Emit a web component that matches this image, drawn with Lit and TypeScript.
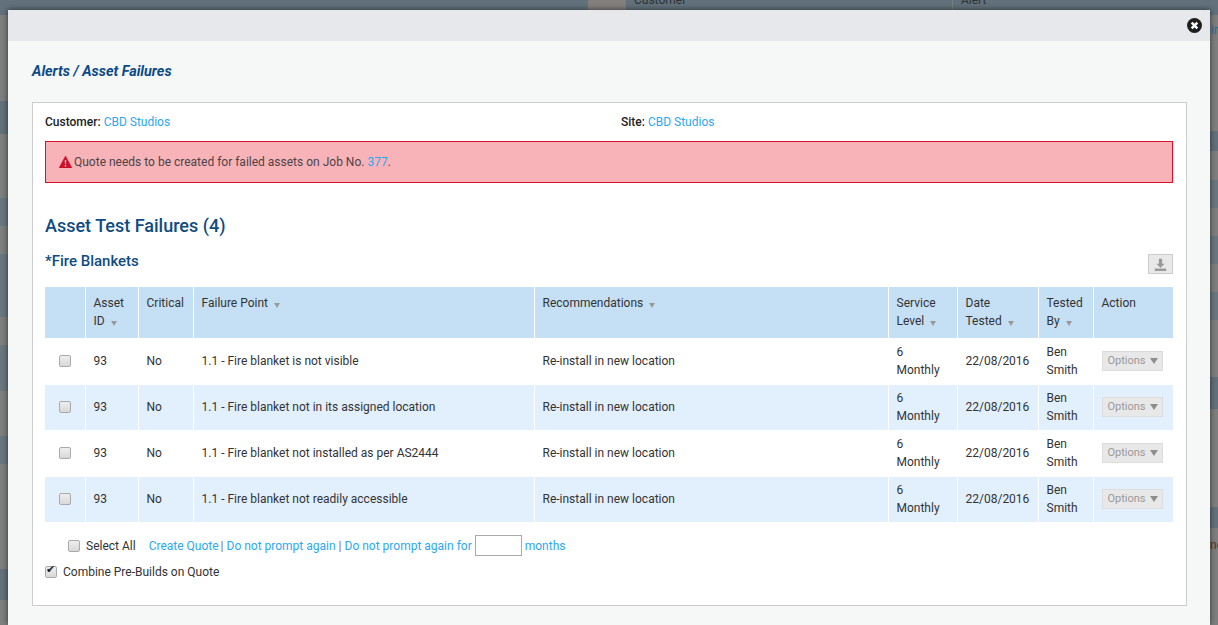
import { LitElement, html, css } from "lit";
import { customElement } from "lit/decorators.js";

const rows = [
  "1.1 - Fire blanket is not visible",
  "1.1 - Fire blanket not in its assigned location",
  "1.1 - Fire blanket not installed as per AS2444",
  "1.1 - Fire blanket not readily accessible",
];

const caret = html`<i class="caret"></i>`;

@customElement("app-root")
export class AppRoot extends LitElement {
  static styles = css`
    :host {
      display: block;
      position: relative;
      height: 625px;
      overflow: hidden;
      font-family: Roboto, "Liberation Sans", sans-serif;
      font-size: 12px;
      line-height: 18px;
      color: #333;
      background-color: #7f7f7f;
    }
    a {
      color: #2ea8ee;
      text-decoration: none;
    }

    /* page behind the modal */
    .backdrop {
      position: absolute;
      inset: 0;
      background:
        linear-gradient(
            to bottom,
            #62717b 0 15px,
            #7f7f7f 15px 101px,
            #62717b 101px 134px,
            #7f7f7f 134px 198px,
            #6b7780 198px 226px,
            #7f7f7f 226px 254px,
            #6b7780 254px 317px,
            #7f7f7f 317px 345px,
            #6b7780 345px 391px,
            #7f7f7f 391px 436px,
            #6b7780 436px 464px,
            #7f7f7f 464px 569px,
            #62717b 569px 600px,
            #7f7f7f 600px
          )
          0 0 / 8px 625px no-repeat,
        linear-gradient(
            to bottom,
            #62717b 0 15px,
            #7f7f7f 15px 131px,
            #62717b 131px 151px,
            #7f7f7f 151px 180px,
            #6b7780 180px 208px,
            #7f7f7f 208px 236px,
            #6b7780 236px 264px,
            #7f7f7f 264px 292px,
            #6b7780 292px 320px,
            #7f7f7f 320px 377px,
            #62717b 377px 409px,
            #7f7f7f 409px 507px,
            #62717b 507px 528px,
            #7f7f7f 528px
          )
          100% 0 / 8px 625px no-repeat,
        linear-gradient(#62717b, #62717b) 0 0 / 100% 15px no-repeat;
    }
    .bg-text {
      position: absolute;
      font-size: 12px;
      color: #2b3236;
    }
    .bg-customer {
      left: 634px;
      top: -9px;
    }
    .bg-alert {
      left: 961px;
      top: -9px;
    }
    .bg-link {
      left: 1211px;
      top: 21px;
      color: #256f96;
    }
    .bg-red {
      left: 1210px;
      top: 536px;
      color: #5e3030;
    }
    .bg-block {
      position: absolute;
      left: 588px;
      top: 0;
      width: 37px;
      height: 10px;
      background: #83807e;
    }
    .bg-line {
      position: absolute;
      top: 0;
      width: 1px;
      height: 10px;
      background: #77807f;
    }

    .modal {
      position: absolute;
      left: 8px;
      right: 8px;
      top: 10px;
      bottom: 0;
      background: #f6f8f8;
      box-shadow: 0 0 6px rgba(0, 0, 0, 0.6);
    }
    .modal-head {
      display: flex;
      justify-content: flex-end;
      align-items: center;
      height: 31px;
      padding-right: 8px;
      background: #e7e8ec;
    }
    .modal-head svg {
      display: block;
      width: 15px;
      height: 15px;
    }
    .modal-body {
      padding: 22px 23px 0 24px;
    }
    h1 {
      margin: 0 0 21px;
      font-size: 14.4px;
      line-height: 18px;
      font-weight: 700;
      font-style: italic;
      color: #0d4a86;
    }
    .panel {
      height: 504px;
      box-sizing: border-box;
      padding: 10px 13px 0 12px;
      background: #fff;
      border: 1px solid #ccc;
    }
    .meta {
      display: grid;
      grid-template-columns: 576px 1fr;
      height: 18px;
    }
    .meta b {
      font-weight: 500;
      color: #222;
    }
    .alert {
      display: flex;
      align-items: center;
      gap: 2px;
      box-sizing: border-box;
      height: 42px;
      margin-top: 10px;
      padding-left: 13px;
      background: #f8b3b9;
      border: 1px solid #d9112a;
      color: #4d4347;
    }
    .alert svg {
      width: 13px;
      height: 12px;
      flex: none;
    }
    h2 {
      margin: 32px 0 0;
      font-size: 18px;
      line-height: 22px;
      font-weight: 500;
      color: #0f4c81;
    }
    .sub {
      display: flex;
      justify-content: space-between;
      align-items: flex-start;
      height: 35px;
      margin-top: 15px;
    }
    h3 {
      margin: 0;
      font-size: 15px;
      line-height: 18px;
      font-weight: 500;
      color: #0f4c81;
    }
    .export {
      display: flex;
      align-items: center;
      justify-content: center;
      box-sizing: border-box;
      width: 25px;
      height: 20px;
      margin-top: 2px;
      background: #e8e8e8;
      border: 1px solid #ccc;
    }
    .export svg {
      width: 13px;
      height: 13px;
    }

    table {
      width: 1128px;
      table-layout: fixed;
      border-collapse: collapse;
    }
    th,
    td {
      box-sizing: border-box;
      padding: 4px 8px 5px;
      font-weight: 400;
      text-align: left;
      border-left: 1px solid #fff;
      border-right: 1px solid #fff;
      border-bottom: 1px solid #fff;
    }
    th:first-child,
    td:first-child {
      border-left: none;
    }
    th:last-child,
    td:last-child {
      border-right: none;
    }
    th {
      height: 51px;
      vertical-align: top;
      padding-top: 7px;
      padding-bottom: 6px;
      background: #c5e0f5;
    }
    td {
      height: 46px;
    }
    tbody tr:nth-child(even) td {
      background: #e2f0fe;
    }
    td.pick {
      padding-left: 14px;
      padding-right: 0;
    }
    .nowrap {
      white-space: nowrap;
    }
    .caret {
      display: inline-block;
      margin-left: 3px;
      vertical-align: -1px;
      border-left: 3px solid transparent;
      border-right: 3px solid transparent;
      border-top: 5px solid #999;
    }
    .options {
      display: inline-flex;
      align-items: center;
      gap: 4px;
      box-sizing: border-box;
      width: 61px;
      height: 20px;
      padding-left: 5px;
      font-size: 11px;
      background: #e8e8e8;
      border: 1px solid #ddd;
      color: #999;
    }
    .options .caret {
      margin-left: 0;
      border-left-width: 4px;
      border-right-width: 4px;
      border-top-width: 6px;
      border-top-color: #8d8d8d;
    }

    input[type="checkbox"] {
      appearance: none;
      position: relative;
      display: block;
      box-sizing: border-box;
      width: 12px;
      height: 12px;
      margin: 0;
      flex: none;
      background: linear-gradient(#eee, #d8d8d8);
      border: 1px solid #aaa;
      border-radius: 2px;
    }
    input[type="checkbox"]:checked::after {
      content: "\\2714";
      position: absolute;
      left: 0;
      top: -4px;
      font-family: "DejaVu Sans", sans-serif;
      font-size: 11px;
      color: #222;
    }
    .select-row {
      display: flex;
      align-items: center;
      margin-top: 12px;
      padding-left: 23px;
      height: 22px;
    }
    .select-row label {
      margin: 0 13px 0 6px;
    }
    .create {
      margin-right: -1px;
    }
    .sep {
      padding: 0 3px;
      color: #7a5ea8;
    }
    .months {
      box-sizing: border-box;
      width: 47px;
      height: 21px;
      margin: 0 3px;
      background: #fff;
      border: 1px solid #aaa;
    }
    .combine {
      display: flex;
      align-items: center;
      gap: 6px;
      margin-top: 6px;
      height: 18px;
    }
  `;

  render() {
    return html`
      <div class="backdrop">
        <div class="bg-block"></div>
        <div class="bg-line" style="left:625px"></div>
        <div class="bg-line" style="left:952px"></div>
        <span class="bg-text bg-customer">Customer</span>
        <span class="bg-text bg-alert">Alert</span>
        <span class="bg-text bg-link">ir</span>
        <span class="bg-text bg-red">ne</span>
      </div>
      <div class="modal">
        <div class="modal-head">
          <svg viewBox="0 0 24 24" aria-label="Close">
            <circle cx="12" cy="12" r="12" fill="#1f1f1f" />
            <path d="M7.5 7.5l9 9M16.5 7.5l-9 9" stroke="#fff" stroke-width="4" />
          </svg>
        </div>
        <div class="modal-body">
          <h1>Alerts / Asset Failures</h1>
          <div class="panel">
            <div class="meta">
              <div><b>Customer:</b> <a href="#">CBD Studios</a></div>
              <div><b>Site:</b> <a href="#">CBD Studios</a></div>
            </div>
            <div class="alert">
              <svg viewBox="0 0 26 24">
                <path d="M13 0l13 24H0z" fill="#c9112a" stroke="#c9112a" stroke-linejoin="round" />
                <path d="M11.4 8h3.2l-.5 8.500h-2.200zM11.500 18h3v3h-3z" fill="#f8b3b9" />
              </svg>
              <span>Quote needs to be created for failed assets on Job No. <a href="#">377</a>.</span>
            </div>
            <h2>Asset Test Failures (4)</h2>
            <div class="sub">
              <h3>*Fire Blankets</h3>
              <div class="export">
                <svg viewBox="0 0 16 16">
                  <path d="M6 1h4v6h3l-5 5-5-5h3z" fill="#999" />
                  <path d="M1 13h14v3H1z" fill="#999" />
                </svg>
              </div>
            </div>
            <table>
              <colgroup>
                <col style="width:40px" />
                <col style="width:53px" />
                <col style="width:55px" />
                <col style="width:341px" />
                <col style="width:354px" />
                <col style="width:69px" />
                <col style="width:81px" />
                <col style="width:55px" />
                <col style="width:80px" />
              </colgroup>
              <thead>
                <tr>
                  <th></th>
                  <th>Asset ID ${caret}</th>
                  <th>Critical</th>
                  <th>Failure Point ${caret}</th>
                  <th>Recommendations ${caret}</th>
                  <th>Service Level ${caret}</th>
                  <th>Date <span class="nowrap">Tested ${caret}</span></th>
                  <th>Tested By ${caret}</th>
                  <th>Action</th>
                </tr>
              </thead>
              <tbody>
                ${rows.map(
                  (failure) => html`
                    <tr>
                      <td class="pick"><input type="checkbox" /></td>
                      <td>93</td>
                      <td>No</td>
                      <td>${failure}</td>
                      <td>Re-install in new location</td>
                      <td>6 Monthly</td>
                      <td>22/08/2016</td>
                      <td>Ben Smith</td>
                      <td><span class="options">Options ${caret}</span></td>
                    </tr>
                  `
                )}
              </tbody>
            </table>
            <div class="select-row">
              <input type="checkbox" />
              <label>Select All</label>
              <a class="create" href="#">Create Quote</a><span class="sep">|</span>
              <a href="#">Do not prompt again</a><span class="sep">|</span>
              <a href="#">Do not prompt again for</a>
              <input class="months" type="text" />
              <a href="#">months</a>
            </div>
            <div class="combine">
              <input type="checkbox" checked />
              <span>Combine Pre-Builds on Quote</span>
            </div>
          </div>
        </div>
      </div>
    `;
  }
}
